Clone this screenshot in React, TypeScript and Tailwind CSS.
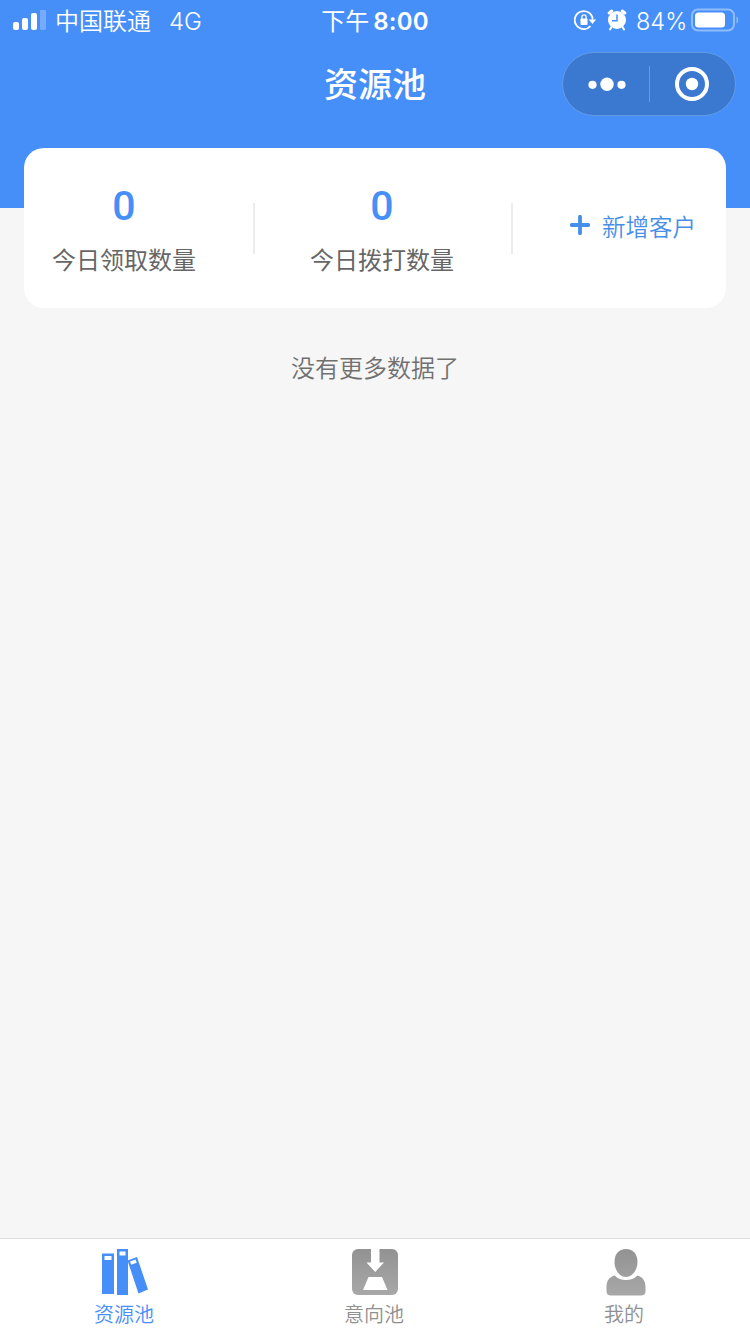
import { useState } from 'react';

type TabKey = 'resource' | 'intent' | 'mine';

interface Stat {
  label: string;
  value: number;
}

const stats: Stat[] = [
  { label: '今日领取数量', value: 0 },
  { label: '今日拨打数量', value: 0 },
];

const tabs: { key: TabKey; label: string }[] = [
  { key: 'resource', label: '资源池' },
  { key: 'intent', label: '意向池' },
  { key: 'mine', label: '我的' },
];

function TabIcon({ name }: { name: TabKey }) {
  if (name === 'resource') {
    return (
      <svg className="w-12 h-12" viewBox="0 0 48 48" fill="currentColor">
        <path fillRule="evenodd" d="M1 5.500h12v40.500H1zM3.500 8v4h7V8z" />
        <path fillRule="evenodd" d="M16 1h11v46H16zM18.500 3.500v4h6v-4z" />
        <path fillRule="evenodd" d="M26.500 12.500l9.500-3.500 11 32.500-9.500 4zM29 13.500l1.200 3.300 5.500-2-1.200-3.300z" />
      </svg>
    );
  }
  if (name === 'intent') {
    return (
      <svg className="w-12 h-12" viewBox="0 0 48 48">
        <defs>
          <linearGradient id="intentFill" x1="0" y1="0" x2="0" y2="1">
            <stop offset="0" stopColor="#929292" />
            <stop offset="1" stopColor="#a8a8a8" />
          </linearGradient>
        </defs>
        <rect x="1" y="1" width="46" height="46" rx="6" fill="url(#intentFill)" />
        <path d="M20 0h8.500v14.500h4.500L24.200 24 15.500 14.500H20z" fill="#fff" />
        <path d="M17.500 29h13.500l5.500 13H12z" fill="#fff" />
      </svg>
    );
  }
  return (
    <svg className="w-12 h-12" viewBox="0 0 48 48" fill="url(#mineFill)">
      <defs>
        <linearGradient id="mineFill" gradientUnits="userSpaceOnUse" x1="0" y1="0" x2="0" y2="48">
          <stop offset="0" stopColor="#929292" />
          <stop offset="1" stopColor="#a8a8a8" />
        </linearGradient>
      </defs>
      <path d="M25 1c7 0 11.500 5.300 11.500 13S31.500 29 25 29 13.500 22 13.500 14 18 1 25 1z" />
      <path d="M13.500 27.500c3 3 7 4.500 11.500 4.500s8.500-1.500 11.500-4.500c5.500 1.500 8 6 8 11.500v4c0 3-1.500 4.500-4.500 4.500H10c-3 0-4.500-1.500-4.500-4.500v-4c0-5.500 2.500-10 8-11.500z" />
    </svg>
  );
}

function StatusBar() {
  return (
    <div className="h-10 grid grid-cols-3 items-center text-white text-2xl leading-10">
      <div className="flex items-center pl-[13px]">
        <svg className="w-[33px] h-5 mb-0.5 shrink-0" viewBox="0 0 33 20" fill="#fff">
          <rect x="0" y="12" width="6" height="8" rx="2" />
          <rect x="9" y="8" width="6" height="12" rx="2" />
          <rect x="18" y="3" width="6" height="17" rx="2" />
          <rect x="27" y="-1" width="6" height="21" rx="1.500" opacity="0.25" />
        </svg>
        <span className="ml-[9px] mb-0.5 font-[350] whitespace-nowrap">中国联通</span>
        <span className="ml-[18px] pt-px text-[24px] font-light font-['Inter','Noto_Sans_CJK_SC',sans-serif]">4G</span>
      </div>
      <div className="flex justify-center pt-0.5 whitespace-nowrap font-['Inter','Noto_Sans_CJK_SC',sans-serif]">
        <span>下午</span>
        <span className="ml-1 font-semibold tracking-[0.2px]">8:00</span>
      </div>
      <div className="flex items-center justify-end pr-[11px]">
        <svg className="w-[22px] h-5 mb-0.5 shrink-0" viewBox="0 0 22 20" fill="none">
          <path d="M16.500 16A9 9 0 1 1 18.700 9.500" stroke="#fff" strokeWidth="1.800" />
          <path d="M14.800 9.500h7.200l-3.500 4.500z" fill="#fff" />
          <rect x="6.500" y="8.500" width="7" height="6.500" rx="0.800" fill="#fff" />
          <path d="M7.900 9V7a2.100 2.100 0 0 1 4.200 0V9" stroke="#fff" strokeWidth="1.300" />
        </svg>
        <svg className="ml-[11px] w-5 h-[22px] mb-0.5 shrink-0" viewBox="0 0 20 22" fill="none">
          <circle cx="10" cy="11" r="9" fill="#fff" />
          <path d="M2.200 4l2.500-2M17.800 4l-2.500-2" stroke="#fff" strokeWidth="3" strokeLinecap="round" />
          <path d="M4.500 18L3 20.500M15.500 18l1.500 2.500" stroke="#fff" strokeWidth="2" strokeLinecap="round" />
          <path d="M10 5.500v6.300H5" stroke="#478ff8" strokeWidth="1.500" />
        </svg>
        <span className="ml-[9px] pt-px w-[53px] whitespace-nowrap text-[23.5px] font-light font-['Inter',sans-serif]">84%</span>
        <svg className="ml-0.5 w-12 h-6 mb-0.5 shrink-0" viewBox="0 0 48 24" fill="none">
          <rect x="1" y="1.500" width="42" height="21" rx="6" stroke="#fff" strokeOpacity="0.4" strokeWidth="2" />
          <rect x="4" y="4.500" width="30" height="15" rx="3.500" fill="#fff" />
          <path d="M45.500 8.500c2.300 1 2.300 6 0 7z" fill="#fff" fillOpacity="0.4" />
        </svg>
      </div>
    </div>
  );
}

function NavBar() {
  return (
    <div className="h-[88px] grid grid-cols-[1fr_auto_1fr] items-center">
      <div />
      <h1 className="pb-0.5 text-[34px] leading-[86px] font-medium text-white">资源池</h1>
      <div className="flex justify-end pr-3.5">
        <div className="w-[174px] h-16 mb-px flex items-center rounded-full border border-[#629ae5] bg-[#3b79d1]">
          <button className="flex-1 flex justify-center" aria-label="更多">
            <svg className="w-10 h-4 ml-[3px]" viewBox="0 0 40 16" fill="#fff">
              <circle cx="5.500" cy="8.800" r="4.100" />
              <circle cx="20" cy="8.300" r="6.700" />
              <circle cx="34.500" cy="8.800" r="4.100" />
            </svg>
          </button>
          <div className="w-px h-9 bg-[#669be4]" />
          <button className="flex-1 flex justify-center" aria-label="关闭">
            <svg className="w-9 h-9" viewBox="0 0 36 36">
              <circle cx="18" cy="18" r="15" fill="none" stroke="#fff" strokeWidth="4" />
              <circle cx="18" cy="18" r="6.200" fill="#fff" />
            </svg>
          </button>
        </div>
      </div>
    </div>
  );
}

export default function App() {
  const [active, setActive] = useState<TabKey>('resource');

  return (
    <div className="w-full h-screen flex flex-col overflow-hidden bg-[#f6f6f6] font-['Noto_Sans_CJK_SC',sans-serif]">
      {/* Header */}
      <header className="h-52 shrink-0 bg-[#478ff8]">
        <StatusBar />
        <NavBar />
      </header>

      {/* Content */}
      <main className="flex-1 -mt-[60px] px-6">
        <section className="h-40 flex rounded-[20px] bg-white">
          {stats.map(stat => (
            <div key={stat.label} className="w-[258px] flex pl-7">
              <div className="w-36 pt-[35px] text-center">
                <p className="h-12 text-[41px] leading-[46px] font-medium text-[#478ff8] font-['Roboto',sans-serif]">
                  {stat.value}
                </p>
                <p className="mt-2.5 text-2xl leading-9 text-[#666] whitespace-nowrap">{stat.label}</p>
              </div>
              <div className="ml-[57px] mt-[55px] w-0.5 h-[51px] bg-[#ececec]" />
            </div>
          ))}
          <button className="flex-1 flex items-center pl-[30px] pb-[5px] text-[#478ee9]">
            <svg className="w-5 h-5 mb-px" viewBox="0 0 20 20" fill="none">
              <path d="M10 1.700v16.600M1.700 10h16.600" stroke="currentColor" strokeWidth="3.800" strokeLinecap="round" />
            </svg>
            <span className="ml-3 text-[23.500px] leading-9 font-[350] whitespace-nowrap">新增客户</span>
          </button>
        </section>
        <p className="mt-[41px] text-2xl leading-9 text-center font-[350] text-[#707070]">没有更多数据了</p>
      </main>

      {/* Tab bar */}
      <nav className="h-24 shrink-0 grid grid-cols-3 border-t border-[#dedede] bg-white">
        {tabs.map(tab => (
          <button
            key={tab.key}
            onClick={() => setActive(tab.key)}
            className={`flex flex-col items-center pt-[9px] ${
              tab.key === active ? 'text-[#478ff8]' : 'text-[#909090]'
            }`}
          >
            <TabIcon name={tab.key} />
            <span className="mt-0.5 mr-0.5 text-xl leading-8 font-[350]">{tab.label}</span>
          </button>
        ))}
      </nav>
    </div>
  );
}
